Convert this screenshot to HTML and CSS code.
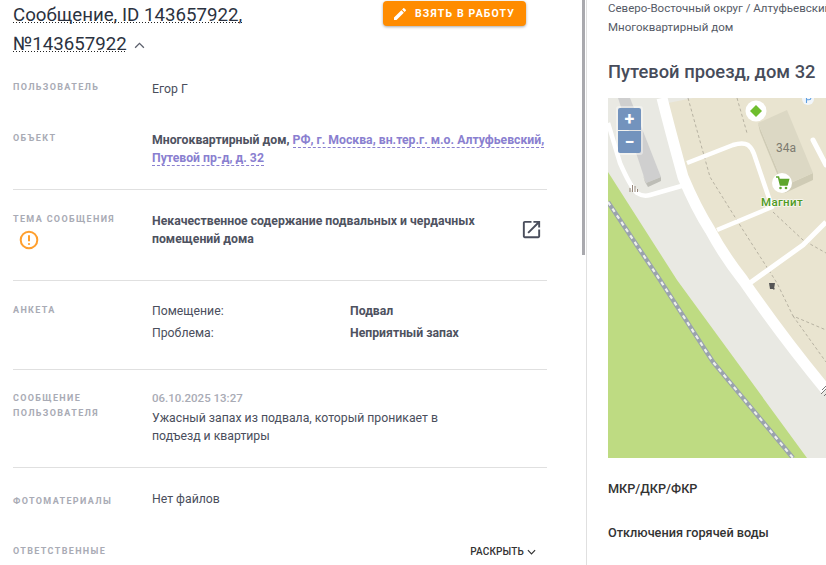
FILE: index.html
```html
<!DOCTYPE html>
<html lang="ru">
<head>
<meta charset="utf-8">
<title>Сообщение</title>
<link rel="stylesheet" href="styles.css">
</head>
<body>
<div class="page">
  <main class="left">
    <header class="head">
      <h1 class="title"><span class="title-text">Сообщение, ID 143657922, №143657922</span>
        <svg class="chev-up" viewBox="0 0 12 8" width="11" height="7"><path d="M1 6.5l5-5 5 5" fill="none" stroke="#5b5f6b" stroke-width="1.5"/></svg>
      </h1>
      <button class="take">
        <svg viewBox="0 0 24 24" width="16" height="16"><path fill="#fff" d="M3 17.25V21h3.75L17.81 9.94l-3.75-3.75L3 17.25zM20.71 7.04a1 1 0 0 0 0-1.41l-2.34-2.34a1 1 0 0 0-1.41 0l-1.83 1.83 3.75 3.75 1.83-1.83z"/></svg>
        <span>ВЗЯТЬ В РАБОТУ</span>
      </button>
    </header>

    <section class="row row-user">
      <div class="label">Пользователь</div>
      <div class="value">Егор Г</div>
    </section>

    <section class="row row-object ruled">
      <div class="label label-nudge">Объект</div>
      <div class="value strong">Многоквартирный дом, <a class="addr">РФ, г. Москва, вн.тер.г. м.о. Алтуфьевский, Путевой пр-д, д. 32</a></div>
    </section>

    <section class="row row-topic ruled">
      <div class="label label-nudge">Тема сообщения
        <svg class="alert" viewBox="0 0 20 20" width="20" height="20"><circle cx="10" cy="10" r="8.3" fill="none" stroke="#ff9f2e" stroke-width="2"/><path d="M10 5.2v6" stroke="#ff9f2e" stroke-width="2"/><circle cx="10" cy="14" r="1.1" fill="#ff9f2e"/></svg>
      </div>
      <div class="value topic">
        <div class="strong topic-text">Некачественное содержание подвальных и чердачных помещений дома</div>
        <svg class="open" viewBox="0 0 24 24" width="23" height="23"><path fill="#4a4e5c" d="M19 19H5V5h7V3H5c-1.11 0-2 .9-2 2v14c0 1.1.89 2 2 2h14c1.1 0 2-.9 2-2v-7h-2v7zM14 3v2h3.59l-9.83 9.83 1.41 1.41L19 6.41V10h2V3h-7z"/></svg>
      </div>
    </section>

    <section class="row row-form ruled">
      <div class="label label-nudge">Анкета</div>
      <div class="value form">
        <div>Помещение:</div><div class="strong">Подвал</div>
        <div>Проблема:</div><div class="strong">Неприятный запах</div>
      </div>
    </section>

    <section class="row row-msg ruled">
      <div class="label label-tall">Сообщение пользователя</div>
      <div class="value msg">
        <div class="date">06.10.2025 13:27</div>
        <div class="msg-text">Ужасный запах из подвала, который проникает в подъезд и квартиры</div>
      </div>
    </section>

    <section class="row row-files">
      <div class="label label-down">Фотоматериалы</div>
      <div class="value">Нет файлов</div>
    </section>

    <section class="row row-resp">
      <div class="label">Ответственные</div>
      <div class="expand"><span>РАСКРЫТЬ</span>
        <svg viewBox="0 0 10 6" width="9" height="6"><path d="M1 1l4 4 4-4" fill="none" stroke="#333" stroke-width="1.3"/></svg>
      </div>
    </section>
    <div class="scrollbar"></div>
  </main>

  <aside class="right">
    <div class="crumb">Северо-Восточный округ / Алтуфьевский район</div>
    <div class="crumb">Многоквартирный дом</div>
    <h2 class="addr-title">Путевой проезд, дом 32</h2>
    <div class="map">
      <svg class="map-svg" viewBox="0 0 218 360" width="218" height="360">
        <rect width="218" height="360" fill="#e9e9e3"/>
        <path d="M60 5L85 0H218V292L135 182L102 132L75 79Z" fill="#e9e4d0"/>
        <path d="M0 74L69 182L199 360H0Z" fill="#bedb82"/>
        <path d="M0 104L52 182L105 264L185 360" fill="none" stroke="#9aa3ad" stroke-width="4.5"/>
        <path d="M0 104L52 182L105 264L185 360" fill="none" stroke="#eef0ee" stroke-width="2.2" stroke-dasharray="4 4"/>

        <g fill="none" stroke="#a9a595" stroke-width="0.8" stroke-dasharray="3 2.5">
          <path d="M80 0L102 79L135 132L169 185L185 218L218 232"/>
          <path d="M185 218L218 264"/>
          <path d="M129 0L139 35"/>
          <path d="M165 114L195 142L218 155"/>
        </g>

        <g fill="none" stroke="#fff" stroke-linejoin="round">
          <path d="M54 0Q62 32 75 79Q88 110 102 132Q116 158 135 182Q175 240 218 292" stroke-width="11"/>
          <path d="M0 25L12 65Q22 88 29 95Q35 99 42 97L77 87" stroke-width="4.5"/>
          <path d="M79 65L125 47Q135 44 140 47Q144 50 146 56L164 109L109 132" stroke-width="4.5"/>
          <path d="M205 42L218 67" stroke-width="5" stroke-linecap="round"/>
          <path d="M135 190L195 147L218 124" stroke-width="5"/>
        </g>

        <path d="M10 0H22L53 79L38 85Z" fill="#cfcfcf"/>
        <path d="M38 85L53 79V83L40 89Z" fill="#bdbdb6"/>
        <path d="M35 77L38 85L40 89L37 84Z" fill="#bdbdb6"/>

        <path d="M150 25L176 88L205 75V82L177 95L152 34Z" fill="#cfcbb5"/>
        <path d="M150 25L179 12L205 75L176 88Z" fill="#dcd8c4"/>
        <text x="178" y="54" class="house">34a</text>

        <circle cx="148" cy="13" r="10.5" fill="#fff"/>
        <path d="M148 7L154 13L148 19L142 13Z" fill="#6fbe2e"/>

        <circle cx="200" cy="1" r="6" fill="#f2f6fa"/>
        <path d="M198.5 5V-2H201a1.8 1.8 0 0 1 0 3.8H198.5" fill="none" stroke="#5f9fe0" stroke-width="1.1"/>

        <circle cx="174" cy="85" r="10" fill="#fff"/>
        <path d="M168 79H170.5L172.5 87H179L180.5 81.5H171" fill="none" stroke="#5da52c" stroke-width="1.6"/>
        <path d="M171 81.5H180.5L179 87H172.5Z" fill="#5da52c"/>
        <circle cx="172.5" cy="90" r="1.3" fill="#5da52c"/>
        <circle cx="178" cy="90" r="1.3" fill="#5da52c"/>
        <text x="174" y="108" class="poi">Магнит</text>

        <g stroke="#8b7a6c" stroke-width="0.9">
          <path d="M22 94V90M24.5 94V87M27 94V88M29.5 94V91"/>
        </g>
        <path d="M161 185H167L166 191H162Z" fill="#555"/>
        <rect x="165" y="190" width="1.5" height="1.5" fill="#555"/>
        <path d="M218 288L214 292M218 291L213 296M218 296L216 298" stroke="#555" stroke-width="0.8"/>
      </svg>
      <div class="zoom">
        <button class="zoom-btn">+</button>
        <button class="zoom-btn">−</button>
      </div>
    </div>
    <div class="sub sub-first">МКР/ДКР/ФКР</div>
    <div class="sub sub-second">Отключения горячей воды</div>
  </aside>
</div>
</body>
</html>
```

FILE: styles.css
```css
* { box-sizing: border-box; }
html, body { margin: 0; padding: 0; height: 100%; overflow: hidden; background: #fff; }
body { font-family: Roboto, "Noto Sans", sans-serif; color: #4a4e5c; font-size: 12px; }

.page { display: flex; height: 565px; width: 826px; overflow: hidden; }

.left { position: relative; width: 586px; flex: none; padding: 0 39px 0 13px; overflow: hidden; }
.scrollbar { position: absolute; top: 0; left: 582px; width: 3px; height: 255px; background: #a9a9ae; }

.head { display: flex; justify-content: space-between; align-items: flex-start; padding-right: 21px; height: 59px; }
.title { margin: 0; width: 250px; font-size: 18.7px; font-weight: 400; line-height: 29px; color: #2b3240; padding-top: 1px; }
.title-text { background: repeating-linear-gradient(90deg, #222 0 1px, transparent 1px 3px) 0 calc(100% - 3px) / 100% 1px no-repeat; -webkit-box-decoration-break: clone; box-decoration-break: clone; }
.chev-up { margin-left: 3px; vertical-align: 1px; }

.take { display: flex; align-items: center; gap: 7px; margin-top: 1px; width: 143px; height: 25px; padding: 0 0 0 9px; border: 0; border-radius: 4px; background: #ff8c00; color: #fff; font: 700 10.5px Roboto, sans-serif; letter-spacing: 1.15px; white-space: nowrap; box-shadow: 0 1px 3px rgba(0,0,0,.35); }

.row { display: grid; grid-template-columns: 139px 1fr; }
.ruled { border-bottom: 1px solid #e0e0e0; }
.row-user { padding-top: 21px; height: 72px; }
.row-object { padding-top: 0; height: 59px; }
.row-topic { padding-top: 21px; height: 91px; }
.row-form { padding-top: 21px; height: 89px; }
.row-msg { padding-top: 20px; height: 98px; }
.row-files { padding-top: 21px; height: 76px; }
.row-resp { padding-top: 0; }

.label { font-size: 9px; font-weight: 700; letter-spacing: 1.35px; text-transform: uppercase; color: #a9abb5; line-height: 15px; }
.label-tall { width: 110px; margin-top: 1px; }
.label-nudge { margin-top: 1px; }
.row-object .label-nudge { margin-top: 0; }
.label-down { margin-top: 5px; }
.value { font-size: 12.25px; line-height: 18px; }
.row-topic .value { margin-top: 1px; }
.row-files .value { margin-top: 1px; }
.strong { font-weight: 700; color: #4e525f; }
.addr { color: #8a7fd0; border-bottom: 1px dashed #8a7fd0; }

.alert { display: block; margin: 3px 0 0 6px; }
.topic { display: flex; justify-content: space-between; align-items: flex-start; }
.topic-text { width: 340px; }
.open { margin-top: 6px; margin-right: 4px; }

.form { display: grid; grid-template-columns: 198px 1fr; align-content: start; row-gap: 4px; }
.date { font-size: 11.5px; font-weight: 500; color: #a9abb5; margin: -1px 0 2px; }
.msg { width: 300px; }
.msg-text { width: 290px; }

.expand { display: flex; align-items: center; justify-content: flex-end; gap: 3px; padding-right: 11px; font-size: 10px; font-weight: 500; letter-spacing: .15px; color: #333; line-height: 15px; align-self: start; }

.right { flex: none; width: 240px; border-left: 1px solid #e0e0e0; padding-left: 21px; overflow: hidden; }
.crumb { font-size: 11.5px; line-height: 19px; color: #555a66; white-space: nowrap; }
.crumb:first-child { margin-top: -1px; }
.addr-title { margin: 23px 0 0; font-size: 18.35px; font-weight: 500; line-height: 24px; color: #474c5a; white-space: nowrap; }
.map { position: relative; width: 218px; height: 360px; margin-top: 14px; overflow: hidden; }
.map-svg { display: block; }
.house { font: 400 12px Roboto, sans-serif; fill: #7d7b70; text-anchor: middle; }
.poi { font: 500 11.5px Roboto, sans-serif; fill: #4f9a1f; text-anchor: middle; letter-spacing: .35px; stroke: #fff; stroke-width: 1.5px; stroke-opacity: .7; paint-order: stroke; }

.zoom { position: absolute; left: 8px; top: 8px; display: flex; flex-direction: column; gap: 1px; padding: 2px; border-radius: 3px; background: rgba(255,255,255,.4); }
.zoom-btn { width: 23px; height: 22px; padding: 0; border: 0; background: #7393bd; color: #fff; font: 700 18px/22px Roboto, sans-serif; }
.zoom-btn:first-child { border-radius: 2px 2px 0 0; }
.zoom-btn:last-child { border-radius: 0 0 2px 2px; }

.sub { font-size: 12.7px; font-weight: 500; line-height: 18px; color: #333; white-space: nowrap; }
.sub-first { margin-top: 22px; }
.sub-second { margin-top: 26px; }
```
